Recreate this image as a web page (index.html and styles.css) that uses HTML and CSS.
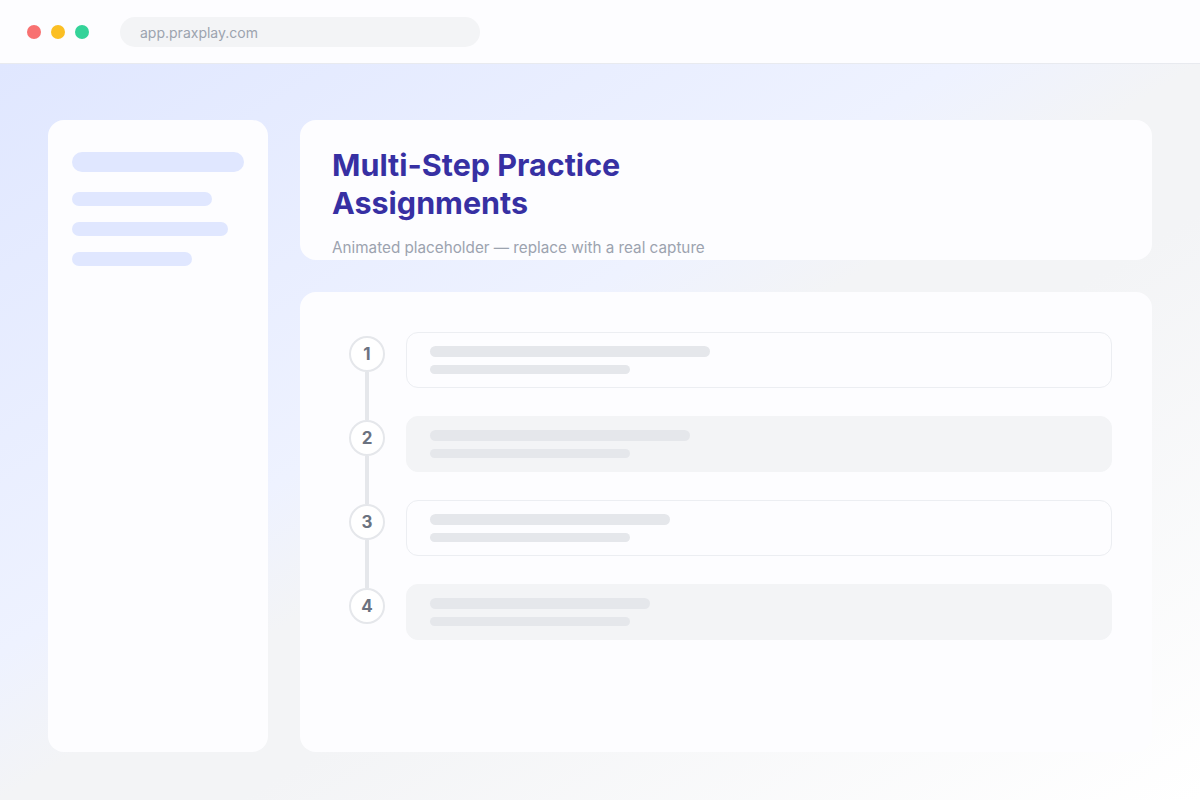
FILE: index.html
```html
<!DOCTYPE html>
<html lang="en">
<head>
    <meta charset="UTF-8">
    <meta name="viewport" content="width=device-width, initial-scale=1.0">
    <title>PraxPlay - Multi-Step Practice Assignments</title>
    <link rel="stylesheet" href="styles.css">
</head>
<body>
    <!-- browser chrome -->
    <div class="browser-bar">
        <div class="dots">
            <span class="dot dot-red"></span>
            <span class="dot dot-yellow"></span>
            <span class="dot dot-green"></span>
        </div>
        <div class="url-bar">app.praxplay.com</div>
    </div>

    <div class="workspace">
        <!-- sidebar -->
        <aside class="sidebar">
            <div class="side-bar side-bar-title"></div>
            <div class="side-bar" style="width: 140px"></div>
            <div class="side-bar" style="width: 156px"></div>
            <div class="side-bar" style="width: 120px"></div>
        </aside>

        <main class="main">
            <section class="hero-card">
                <h1 class="hero-title">Multi-Step Practice Assignments</h1>
                <p class="hero-subtitle">Animated placeholder — replace with a real capture</p>
            </section>

            <section class="steps-card">
                <div class="step">
                    <div class="step-marker"><span class="step-num">1</span></div>
                    <div class="step-box">
                        <div class="line line-main" style="width: 280px"></div>
                        <div class="line line-sub"></div>
                    </div>
                </div>
                <div class="step">
                    <div class="step-marker"><span class="step-num">2</span></div>
                    <div class="step-box step-box-muted">
                        <div class="line line-main" style="width: 260px"></div>
                        <div class="line line-sub"></div>
                    </div>
                </div>
                <div class="step">
                    <div class="step-marker"><span class="step-num">3</span></div>
                    <div class="step-box">
                        <div class="line line-main" style="width: 240px"></div>
                        <div class="line line-sub"></div>
                    </div>
                </div>
                <div class="step step-last">
                    <div class="step-marker"><span class="step-num">4</span></div>
                    <div class="step-box step-box-muted">
                        <div class="line line-main" style="width: 220px"></div>
                        <div class="line line-sub"></div>
                    </div>
                </div>
            </section>
        </main>
    </div>
</body>
</html>
```

FILE: styles.css
```css
* {
    margin: 0;
    padding: 0;
    box-sizing: border-box;
}

body {
    font-family: Inter, 'Noto Sans', 'Liberation Sans', sans-serif;
    width: 1200px;
    height: 800px;
    overflow: hidden;
    background: #ffffff;
}

/* 浏览器顶栏 */
.browser-bar {
    height: 64px;
    display: flex;
    align-items: center;
    padding-left: 27px;
    background: #fdfdff;
    border-bottom: 1px solid #e8eaef;
}

.dots {
    display: flex;
    gap: 10px;
    margin-right: 31px;
}

.dot {
    width: 14px;
    height: 14px;
    border-radius: 50%;
}

.dot-red { background: #f87171; }
.dot-yellow { background: #fbbf24; }
.dot-green { background: #34d399; }

.url-bar {
    width: 360px;
    height: 30px;
    border-radius: 15px;
    background: #f3f4f6;
    color: #9ca3af;
    font-size: 14px;
    line-height: 31px;
    padding-left: 20px;
}

/* 工作区 */
.workspace {
    height: 736px;
    display: grid;
    grid-template-columns: 220px 1fr;
    gap: 32px;
    padding: 56px 48px 48px;
    background: linear-gradient(to bottom right, #e0e7ff 0%, #eef2ff 40%, #f3f4f6 50%, #f3f4f6 60%, #ffffff 100%);
}

.sidebar {
    background: #fdfdff;
    border-radius: 16px;
    padding: 32px 24px;
    display: flex;
    flex-direction: column;
    gap: 16px;
}

.side-bar {
    height: 14px;
    border-radius: 7px;
    background: #e0e7ff;
}

.side-bar-title {
    width: 172px;
    height: 20px;
    border-radius: 10px;
    margin-bottom: 4px;
}

.main {
    display: flex;
    flex-direction: column;
    gap: 32px;
    min-height: 0;
}

/* 标题卡片 */
.hero-card {
    height: 140px;
    background: #fdfdff;
    border-radius: 16px;
    padding: 26px 32px 0;
    overflow: hidden;
}

.hero-title {
    max-width: 320px;
    font-size: 30.5px;
    line-height: 38px;
    font-weight: 700;
    color: #3730a3;
}

.hero-subtitle {
    margin-top: 16px;
    font-size: 15.25px;
    line-height: 20px;
    color: #9ca3af;
}

/* 步骤卡片 */
.steps-card {
    flex: 1;
    background: #fdfdff;
    border-radius: 16px;
    padding: 40px 40px 40px 49px;
    display: flex;
    flex-direction: column;
    gap: 28px;
}

.step {
    display: flex;
    gap: 21px;
}

.step-marker {
    position: relative;
    width: 36px;
    flex-shrink: 0;
    padding-top: 4px;
}

.step-marker::after {
    content: '';
    position: absolute;
    left: 16px;
    top: 40px;
    width: 4px;
    height: 48px;
    background: #e5e7eb;
}

.step-last .step-marker::after {
    display: none;
}

.step-num {
    display: flex;
    align-items: center;
    justify-content: center;
    width: 36px;
    height: 36px;
    border-radius: 50%;
    border: 2px solid #e5e7eb;
    background: #ffffff;
    color: #6b7280;
    font-size: 17px;
    font-weight: 700;
}

.step-box {
    flex: 1;
    height: 56px;
    border-radius: 12px;
    border: 1px solid #eceef2;
    background: #fdfdff;
    padding: 13px 23px;
    display: flex;
    flex-direction: column;
    gap: 8px;
}

.step-box-muted {
    background: #f3f4f6;
    border-color: #f3f4f6;
}

.line {
    background: #e5e7eb;
}

.line-main {
    height: 12px;
    border-radius: 6px;
}

.line-sub {
    width: 200px;
    height: 10px;
    border-radius: 5px;
}
```
